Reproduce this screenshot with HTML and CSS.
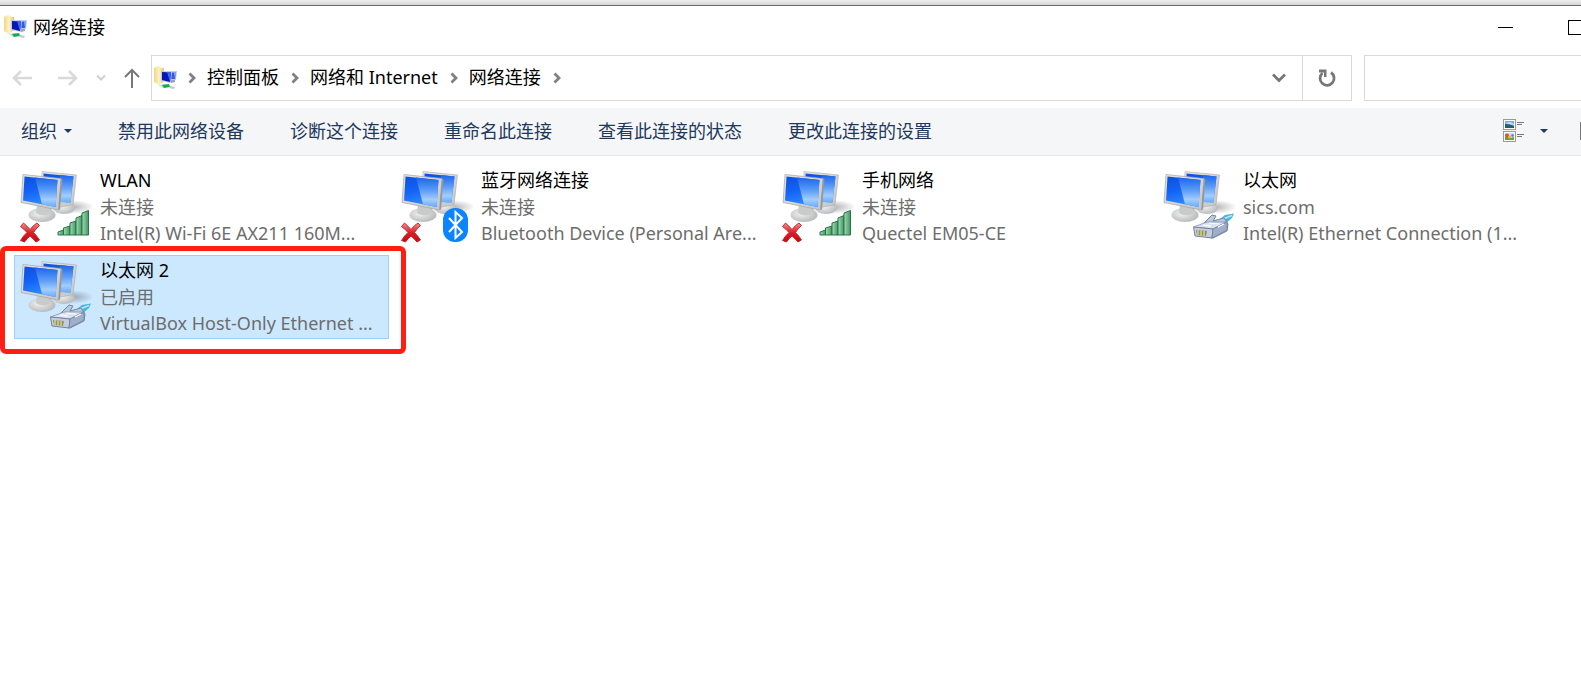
FILE: index.html
```html
<!DOCTYPE html>
<html lang="zh-CN">
<head>
<meta charset="UTF-8">
<meta name="viewport" content="width=device-width, initial-scale=1.0">
<title>网络连接</title>
<link rel="stylesheet" href="styles.css">
</head>
<body>

<!-- shared icon shapes -->
<svg class="defs" aria-hidden="true">
  <defs>
    <linearGradient id="screen" x1="0" y1="0" x2="0.3" y2="1">
      <stop offset="0" stop-color="#0d4fe0"/>
      <stop offset="0.5" stop-color="#1463f6"/>
      <stop offset="1" stop-color="#2f8bff"/>
    </linearGradient>
    <linearGradient id="shine" x1="0" y1="0" x2="0" y2="1">
      <stop offset="0" stop-color="#1c66ec"/>
      <stop offset="0.45" stop-color="#5f9ff8"/>
      <stop offset="0.75" stop-color="#a3cdfd"/>
      <stop offset="1" stop-color="#66adff"/>
    </linearGradient>
    <linearGradient id="frame" x1="0" y1="0" x2="1" y2="1">
      <stop offset="0" stop-color="#e6e6e4"/>
      <stop offset="1" stop-color="#c4c5c6"/>
    </linearGradient>
    <radialGradient id="base" cx="0.4" cy="0.4" r="0.65">
      <stop offset="0" stop-color="#f2f2f2"/>
      <stop offset="1" stop-color="#b5b7b9"/>
    </radialGradient>
    <radialGradient id="shadow">
      <stop offset="0" stop-color="#555" stop-opacity="0.45"/>
      <stop offset="1" stop-color="#555" stop-opacity="0"/>
    </radialGradient>
    <linearGradient id="bar" x1="0" y1="0" x2="1" y2="0">
      <stop offset="0" stop-color="#a5d9b4"/>
      <stop offset="1" stop-color="#3f9860"/>
    </linearGradient>
    <linearGradient id="cross" x1="0" y1="0" x2="0" y2="1">
      <stop offset="0" stop-color="#f58c8c"/>
      <stop offset="0.5" stop-color="#dc2028"/>
      <stop offset="1" stop-color="#c8040c"/>
    </linearGradient>
    <linearGradient id="folder" x1="0" y1="0" x2="1" y2="0">
      <stop offset="0" stop-color="#f0d684"/>
      <stop offset="0.5" stop-color="#fff3c4"/>
      <stop offset="1" stop-color="#e3c977"/>
    </linearGradient>

    <symbol id="computers" viewBox="0 0 72 84">
      <ellipse cx="52" cy="42" rx="22" ry="7" fill="url(#shadow)"/>
      <ellipse cx="44" cy="43" rx="11" ry="6" fill="url(#base)"/>
      <path d="M22 6.500L56.500 10 53 39.500 36 43 21 36Z" fill="url(#frame)" stroke="#aaa" stroke-width="0.6"/>
      <path d="M23.500 8.500L53.500 11.500 50.500 37.500 24 36Z" fill="url(#screen)"/>
      <path d="M40 10L53.500 11.500 50.500 37.500 40 37Z" fill="url(#shine)"/>
      <path d="M17 39L31 41 32 48H17Z" fill="#b4b6b8"/>
      <ellipse cx="22" cy="50" rx="13.500" ry="7" fill="url(#base)"/>
      <path d="M17 39L30 41 29 49Q22 52 16 48Z" fill="#c9caca"/>
      <path d="M3 9.500L41 13.500 38.500 45 1 37.500Z" fill="url(#frame)" stroke="#a5a5a5" stroke-width="0.7"/>
      <path d="M4.500 11.500L37.500 15 35.500 42 3 35.500Z" fill="url(#screen)"/>
      <path d="M15 12.600L37.500 15 35.500 42 22 39.300Z" fill="url(#shine)"/>
      <path d="M41 13.500L42.500 14.500 40 44.500 38.500 45Z" fill="#969899"/>
    </symbol>

    <symbol id="offline" viewBox="0 0 72 84">
      <path d="M3.500 58Q7 61 10 64.500 13.500 60 17 58L19.500 60.500Q16 63.500 13.500 67.500 17 71 19.500 75L16 77Q13 73.500 10 71 7 73.500 4.500 77L0.500 75.500Q3 71 7 67.500 4 64 0.500 61.500Z" fill="url(#cross)" stroke="#b92229" stroke-width="0.9"/>
    </symbol>

    <symbol id="signal" viewBox="0 0 72 84">
      <g fill="url(#bar)" stroke="#28744a" stroke-width="1">
        <path d="M38 70V67L43.500 65V70Z"/>
        <path d="M43.500 70V63L50 61V70Z"/>
        <path d="M50 70V58L56 56V70Z"/>
        <path d="M56 70V53L62 50.500V70Z"/>
        <path d="M62 70V48L68.500 45.500V70Z"/>
      </g>
    </symbol>

    <symbol id="bluetooth" viewBox="0 0 72 84">
      <rect x="42" y="43" width="25" height="34" rx="12" fill="#0a84ff"/>
      <path d="M48 53L61 67 54.500 73V47L61 53 48 67" fill="none" stroke="#fff" stroke-width="2"/>
    </symbol>

    <symbol id="plug" viewBox="0 0 72 84">
      <path d="M57 54L62 50 71 48.500 69 53 62 59Z" fill="#4ab4dc"/>
      <path d="M60 54L69 50.500" stroke="#b5e8f7" stroke-width="1.500"/>
      <path d="M41 58L49 50 53 51 50 56 61 53 65 59 64 66 50 73 44 72Z" fill="#bcc8dc" stroke="#7484a0" stroke-width="1"/>
      <path d="M30.500 62L44 57 63 57 50 64Z" fill="#dbe3ef" stroke="#8190ab" stroke-width="0.800"/>
      <path d="M30.500 62L50 64 49 73 32 71Z" fill="#c3cddd" stroke="#74839f" stroke-width="1"/>
      <path d="M50 64L64 57 64 65 49 73Z" fill="#9fafc9" stroke="#7182a0" stroke-width="0.800"/>
      <path d="M33 65L44 66 43 71 34 70Z" fill="#8c8f78"/>
      <path d="M35 65V70M38 65.500V70.500M41 66V71" stroke="#e5dc78" stroke-width="1.300"/>
      <path d="M40 60L48 61M46 58L56 59M55 62L61 59" stroke="#fff" stroke-width="1.200"/>
    </symbol>

    <symbol id="folder-net" viewBox="0 0 24 24">
      <path d="M0 2L4 0 8 2 10 2V15L5 19 0 16Z" fill="url(#folder)"/>
      <path d="M12 5.500L23 5 22 14 14 15Z" fill="#b8c8ee"/>
      <path d="M14 6.500H22L21 13H15Z" fill="#3659df"/>
      <path d="M20 6.500H22L21 13Z" fill="#8fb1f6"/>
      <path d="M7 5L18 5.500 17 17 7 15Z" fill="#b9c6e6"/>
      <path d="M8 6L17 6.500 16 16 8 14Z" fill="#0716b8"/>
      <path d="M13 6.300L17 6.500 16 16Z" fill="#3a69ed"/>
      <path d="M17 14L21 14 21 16 17 17Z" fill="#9aa4b4"/>
      <path d="M4 19L11 18 16 20 9 22Z" fill="#c9e6d2"/>
      <path d="M8 19L15 18 16 21 10 22Z" fill="#15ad4b"/>
      <path d="M16 20L21 21 20 23 15 22Z" fill="#c0c8c4"/>
    </symbol>

    <symbol id="crumb" viewBox="0 0 8 12">
      <path d="M1.500 1.500L6 6 1.500 10.500" fill="none" stroke="#808080" stroke-width="2.800"/>
    </symbol>
  </defs>
</svg>

<div class="window">
  <header class="titlebar">
    <svg class="app-icon"><use href="#folder-net"/></svg>
    <h1>网络连接</h1>
    <div class="controls">
      <button type="button" aria-label="最小化">
        <svg width="15" height="15"><path d="M0 7.500H15" stroke="#000"/></svg>
      </button>
      <button type="button" aria-label="最大化">
        <svg width="15" height="15"><rect x="0.500" y="0.500" width="14" height="14" fill="none" stroke="#000"/></svg>
      </button>
    </div>
  </header>

  <div class="navbar">
    <div class="history">
      <button class="back" type="button" aria-label="后退" disabled>
        <svg width="20" height="16"><path d="M20 8H2M9 1L2 8 9 15" fill="none" stroke="#d9d9d9" stroke-width="2.600"/></svg>
      </button>
      <button class="forward" type="button" aria-label="前进" disabled>
        <svg width="20" height="16"><path d="M0 8H18M11 1L18 8 11 15" fill="none" stroke="#d9d9d9" stroke-width="2.600"/></svg>
      </button>
      <button class="recent" type="button" aria-label="最近浏览的位置" disabled>
        <svg width="10" height="8"><path d="M1 1.500L5 5.500 9 1.500" fill="none" stroke="#d0d0d0" stroke-width="2"/></svg>
      </button>
      <button class="up" type="button" aria-label="上移">
        <svg width="16" height="20"><path d="M8 20V2M1 9L8 2 15 9" fill="none" stroke="#777" stroke-width="2"/></svg>
      </button>
    </div>
    <nav class="address">
      <svg class="app-icon"><use href="#folder-net"/></svg>
      <svg class="sep"><use href="#crumb"/></svg>
      <a href="#">控制面板</a>
      <svg class="sep"><use href="#crumb"/></svg>
      <a href="#">网络和 Internet</a>
      <svg class="sep"><use href="#crumb"/></svg>
      <a href="#">网络连接</a>
      <svg class="sep"><use href="#crumb"/></svg>
      <button class="previous" type="button" aria-label="以前的位置">
        <svg width="14" height="10"><path d="M1 1.500L7 7.500 13 1.500" fill="none" stroke="#777" stroke-width="2.800"/></svg>
      </button>
      <button class="refresh" type="button" aria-label="刷新">
        <svg width="18" height="18"><path d="M13 3.500A7 7 0 1 1 4.500 4" fill="none" stroke="#777" stroke-width="2.800"/><path d="M1 0.500H8.500V8H6V3.500H1Z" fill="#777"/></svg>
      </button>
    </nav>
    <input class="search" type="search" aria-label="搜索">
  </div>

  <div class="toolbar">
    <button type="button">组织
      <svg class="caret" width="8" height="4"><path d="M0 0H8L4 4Z" fill="#1e395b"/></svg>
    </button>
    <button type="button">禁用此网络设备</button>
    <button type="button">诊断这个连接</button>
    <button type="button">重命名此连接</button>
    <button type="button">查看此连接的状态</button>
    <button type="button">更改此连接的设置</button>
    <button class="view" type="button" aria-label="更改视图">
      <svg width="22" height="24">
        <rect x="0.500" y="0.500" width="12" height="10" fill="#fff" stroke="#999"/>
        <rect x="2" y="2" width="9" height="7" fill="#73a9ec"/>
        <path d="M2 5L7 5.500 11 7V9H2Z" fill="#275e67"/>
        <path d="M2 4L7 3 11 5V6L6 5Z" fill="#cce6fb"/>
        <rect x="0.500" y="12.500" width="12" height="10" fill="#fff" stroke="#999"/>
        <rect x="2" y="14" width="9" height="7" fill="#c5dcf7"/>
        <path d="M2 18L6 17 8 19 11 18V21H2Z" fill="#63a445"/>
        <circle cx="4" cy="16.500" r="2" fill="#e15124"/>
        <circle cx="6.500" cy="18" r="1.500" fill="#e9b935"/>
        <circle cx="9.500" cy="16.500" r="1.300" fill="#7767d0"/>
        <path d="M14 3.500H21M14 5.500H19M14 15.500H21M14 17.500H19" stroke="#777"/>
      </svg>
      <svg class="caret" width="8" height="4"><path d="M0 0H8L4 4Z" fill="#1e395b"/></svg>
    </button>
    <button class="preview" type="button" aria-label="显示预览窗格">
      <svg width="20" height="18"><rect x="0.500" y="0.500" width="19" height="17" fill="#fff" stroke="#777"/></svg>
    </button>
  </div>

  <main class="connections">
    <button class="connection" type="button">
      <svg class="icon"><use href="#computers"/><use href="#offline"/><use href="#signal"/></svg>
      <span class="details">
        <span class="name">WLAN</span>
        <span>未连接</span>
        <span>Intel(R) Wi-Fi 6E AX211 160M...</span>
      </span>
    </button>
    <button class="connection" type="button">
      <svg class="icon"><use href="#computers"/><use href="#offline"/><use href="#bluetooth"/></svg>
      <span class="details">
        <span class="name">蓝牙网络连接</span>
        <span>未连接</span>
        <span>Bluetooth Device (Personal Are...</span>
      </span>
    </button>
    <button class="connection" type="button">
      <svg class="icon"><use href="#computers"/><use href="#offline"/><use href="#signal"/></svg>
      <span class="details">
        <span class="name">手机网络</span>
        <span>未连接</span>
        <span>Quectel EM05-CE</span>
      </span>
    </button>
    <button class="connection" type="button">
      <svg class="icon"><use href="#computers"/><use href="#plug"/></svg>
      <span class="details">
        <span class="name">以太网</span>
        <span>sics.com</span>
        <span>Intel(R) Ethernet Connection (1...</span>
      </span>
    </button>
    <button class="connection selected" type="button">
      <svg class="icon"><use href="#computers"/><use href="#plug"/></svg>
      <span class="details">
        <span class="name">以太网 2</span>
        <span>已启用</span>
        <span>VirtualBox Host-Only Ethernet ...</span>
      </span>
    </button>
  </main>
</div>

</body>
</html>
```
FILE: styles.css
```css
*,
*::before,
*::after {
  box-sizing: border-box;
}

body {
  margin: 0;
  background: #fff;
  color: #000;
  font-family: "Noto Sans", "Noto Sans CJK SC", sans-serif;
  font-size: 18px;
  line-height: 26px;
  overflow: hidden;
}

button {
  display: flex;
  align-items: center;
  justify-content: center;
  padding: 0;
  border: 0;
  background: none;
  color: inherit;
  font: inherit;
}

svg {
  display: block;
  flex: none;
}

.defs {
  position: absolute;
  width: 0;
  height: 0;
}

.window {
  min-height: 100vh;
  overflow: hidden;
}

.window::before {
  content: "";
  display: block;
  height: 6px;
  background: linear-gradient(#f0f0f0, #d2d2d2);
  border-bottom: 1px solid #6b6b6b;
}

.app-icon {
  width: 24px;
  height: 24px;
}

/* title bar */
.titlebar {
  display: flex;
  align-items: center;
  height: 42px;
  padding-left: 4px;
}

.titlebar h1 {
  margin: 0 0 0 5px;
  font-size: 18px;
  font-weight: normal;
}

.controls {
  display: flex;
  margin-left: auto;
  margin-right: -29px;
}

.controls button {
  width: 70px;
  height: 42px;
}

/* address row */
.navbar {
  display: flex;
  align-items: center;
  padding: 7px 0;
}

.history {
  display: flex;
  align-items: center;
  gap: 18px;
  padding: 0 11px 0 12px;
}

.back {
  margin-right: 8px;
}

.up {
  width: 16px;
}

.address {
  display: flex;
  flex: 1;
  align-items: center;
  height: 46px;
  padding-left: 2px;
  border: 1px solid #d9d9d9;
}

.address a {
  padding-bottom: 2px;
  color: #000;
  text-decoration: none;
  white-space: nowrap;
}

.sep {
  width: 8px;
  height: 12px;
  margin: 0 11px 0 12px;
}

.address .app-icon + .sep {
  margin-left: 10px;
}

.previous {
  width: 46px;
  height: 44px;
  margin-left: auto;
}

.refresh {
  width: 49px;
  height: 44px;
  border-left: 1px solid #d9d9d9;
}

.search {
  width: 217px;
  height: 46px;
  margin-left: 12px;
  padding: 0 12px;
  border: 1px solid #d9d9d9;
  border-right: 0;
  border-radius: 0;
  background: #fff;
  font: inherit;
  appearance: none;
}

/* command bar */
.toolbar {
  display: flex;
  align-items: center;
  gap: 46px;
  height: 48px;
  padding: 0 0 2px 21px;
  border-bottom: 1px solid #e8e8e8;
  background: #f5f6f8;
  color: #1e395b;
}

.toolbar button {
  gap: 7px;
  white-space: nowrap;
}

.toolbar .view {
  gap: 15px;
  margin-left: auto;
}

.toolbar .preview {
  margin-left: -14px;
  margin-right: -19px;
}

/* connection tiles */
.connections {
  display: grid;
  grid-template-columns: repeat(auto-fill, 375px);
  gap: 6px;
  padding: 9px 0 0 14px;
}

.connection {
  height: 84px;
  padding-left: 5px;
  border: 1px solid transparent;
  justify-content: flex-start;
  text-align: left;
  color: #6d6d6d;
}

.connection .icon {
  width: 72px;
  height: 84px;
}

.details {
  display: flex;
  flex-direction: column;
  margin-left: 8px;
  padding-bottom: 1px;
  white-space: nowrap;
}

.name {
  margin-bottom: 1px;
  color: #000;
}

.selected {
  position: relative;
  border-color: #99d1ff;
  background: #cce8ff;
}

/* red marker drawn round the selected connection */
.selected::after {
  content: "";
  position: absolute;
  inset: -10px -18px -16px -15px;
  border: 5px solid #ff1f12;
  border-radius: 6px;
}
```
